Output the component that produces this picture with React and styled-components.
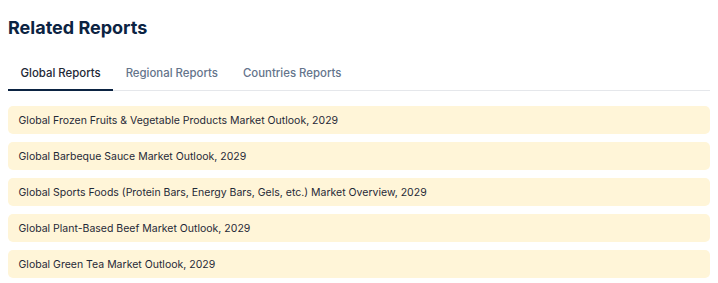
import styled, { createGlobalStyle } from "styled-components";

const GlobalStyle = createGlobalStyle`
  body {
    margin: 0;
    background: #ffffff;
    font-family: Inter, "Noto Sans", sans-serif;
  }
`;

const reports = [
  "Global Frozen Fruits & Vegetable Products Market Outlook, 2029",
  "Global Barbeque Sauce Market Outlook, 2029",
  "Global Sports Foods (Protein Bars, Energy Bars, Gels, etc.) Market Overview, 2029",
  "Global Plant-Based Beef Market Outlook, 2029",
  "Global Green Tea Market Outlook, 2029",
];

const tabs = ["Global Reports", "Regional Reports", "Countries Reports"];

const Section = styled.section`
  padding: 14px 8px 0;
`;

const Title = styled.h2`
  margin: 0;
  font-size: 18px;
  line-height: 28px;
  font-weight: 700;
  color: #0b2342;
`;

const TabList = styled.div`
  display: flex;
  margin-top: 13px;
  border-bottom: 1px solid #e5e7eb;
`;

const Tab = styled.button`
  padding: 10px 12.5px 8px;
  margin-bottom: -1px;
  border: 0;
  border-bottom: 2px solid ${(p) => (p.$active ? "#0b2342" : "transparent")};
  background: none;
  font-family: inherit;
  font-size: 11.4px;
  line-height: 16px;
  font-weight: 500;
  color: ${(p) => (p.$active ? "#1f2937" : "#64748b")};
  cursor: pointer;
`;

const List = styled.ul`
  list-style: none;
  margin: 15px 0 0;
  padding: 0;
  display: flex;
  flex-direction: column;
  gap: 8px;
`;

const Item = styled.li`
  height: 28px;
  padding: 0 10.5px;
  display: flex;
  align-items: center;
  background: #fff5d8;
  border-radius: 5px;
  font-size: 10.5px;
  color: #1f2937;
`;

const App = () => {
  return (
    <Section>
      <GlobalStyle />
      <Title>Related Reports</Title>
      <TabList>
        {tabs.map((t, i) => (
          <Tab key={t} $active={i === 0}>
            {t}
          </Tab>
        ))}
      </TabList>
      <List>
        {reports.map((r) => (
          <Item key={r}>{r}</Item>
        ))}
      </List>
    </Section>
  );
};

export default App;
